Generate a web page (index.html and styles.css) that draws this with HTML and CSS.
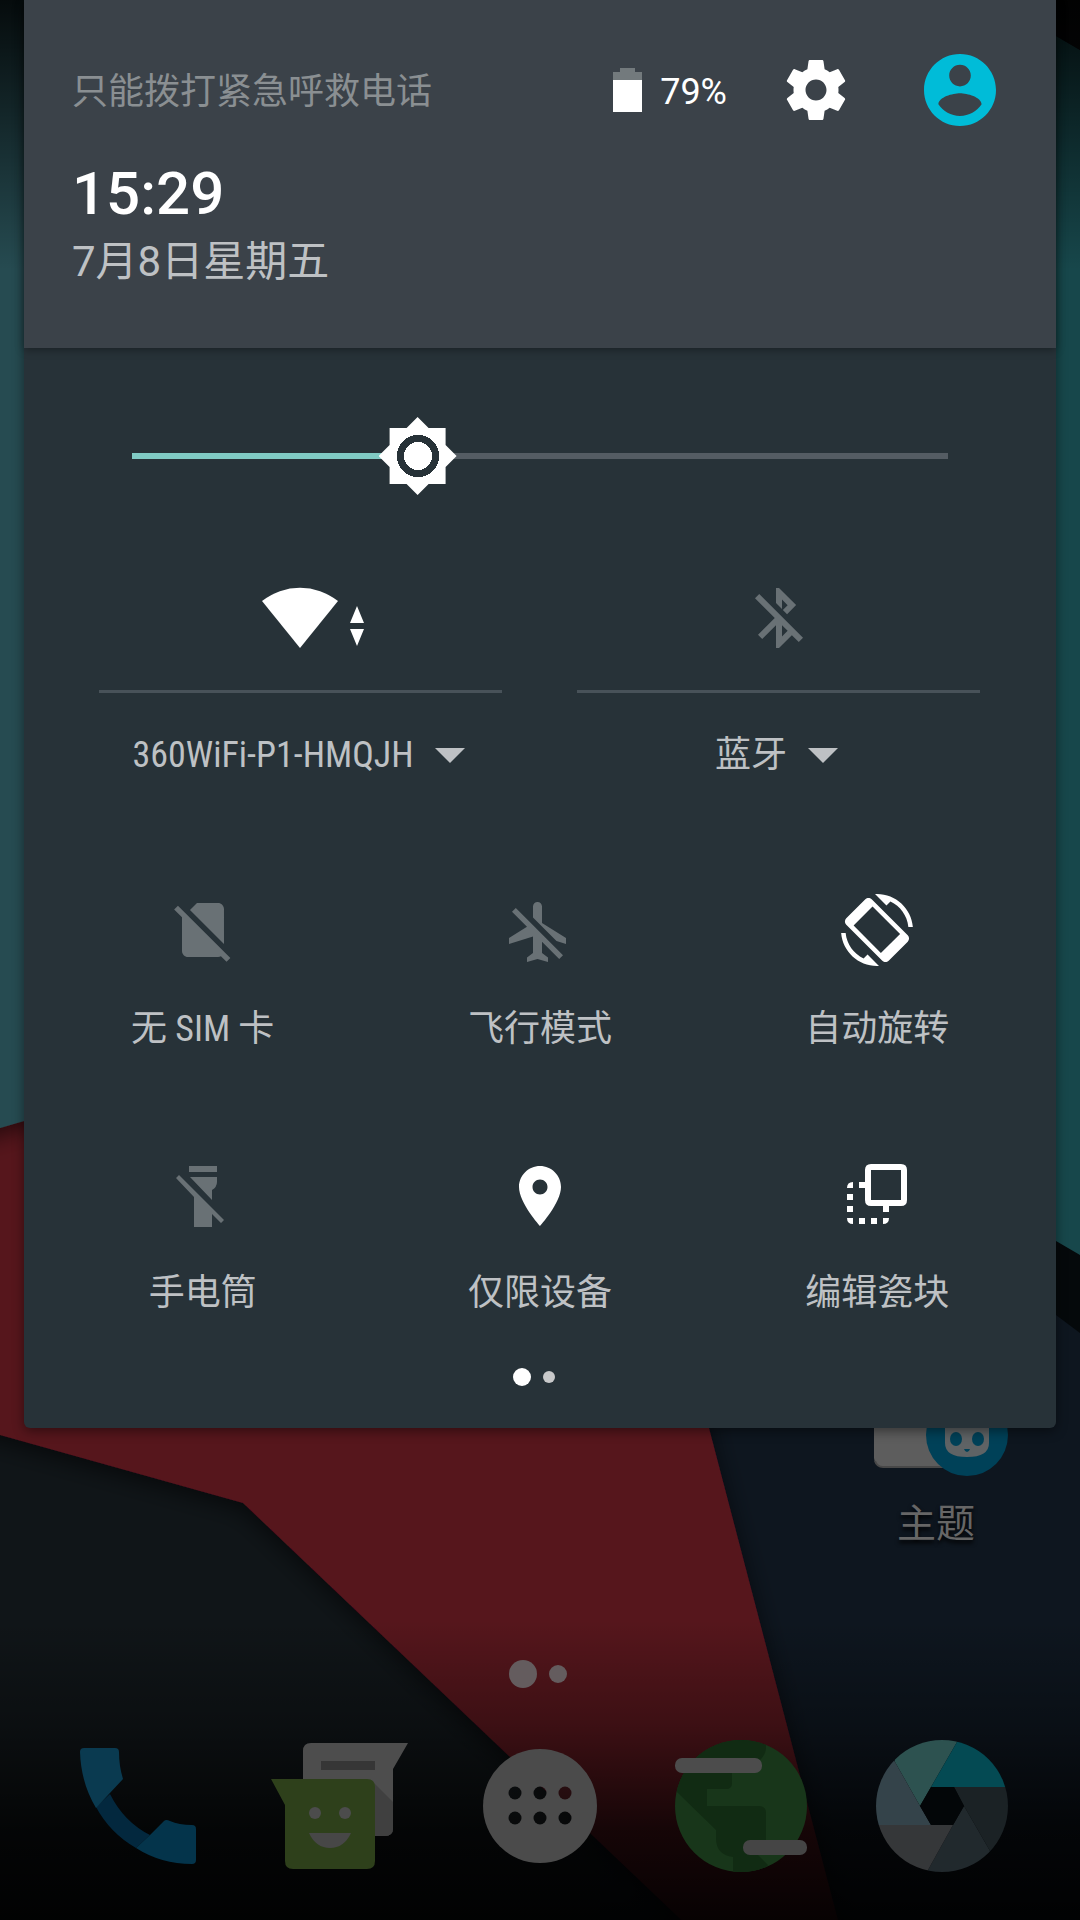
FILE: index.html
```html
<!DOCTYPE html>
<html lang="zh-CN">
<head>
    <meta charset="UTF-8">
    <meta name="viewport" content="width=device-width, initial-scale=1.0">
    <title>快捷设置</title>
    <link rel="stylesheet" href="styles.css">
</head>
<body>
    <div class="screen">
        <svg class="wallpaper" viewBox="0 0 1080 1920" preserveAspectRatio="none" aria-hidden="true">
            <defs>
                <linearGradient id="fade-top" x1="0" y1="0" x2="0" y2="1">
                    <stop offset="0" stop-color="#000" stop-opacity=".85"/>
                    <stop offset=".3" stop-color="#000" stop-opacity=".6"/>
                    <stop offset="1" stop-color="#000" stop-opacity="0"/>
                </linearGradient>
                <linearGradient id="fade-bottom" x1="0" y1="0" x2="0" y2="1">
                    <stop offset="0" stop-color="#000" stop-opacity="0"/>
                    <stop offset=".35" stop-color="#000" stop-opacity=".3"/>
                    <stop offset=".7" stop-color="#000" stop-opacity=".75"/>
                    <stop offset="1" stop-color="#000" stop-opacity=".92"/>
                </linearGradient>
                <filter id="paper-shadow" x="-20%" y="-20%" width="140%" height="140%">
                    <feDropShadow dx="0" dy="6" stdDeviation="12" flood-color="#000" flood-opacity=".6"/>
                </filter>
            </defs>
            <rect width="1080" height="1920" fill="#0e161f"/>
            <path d="M1000 1200h80v133L1000 1273z" fill="#05090b"/>
            <path d="M0 1400H600V1920H0z" fill="#101518"/>
            <path d="M-60 1060H684L709 1428 851 1970H734L243 1503 0 1435-60 1418z" fill="#56131e" filter="url(#paper-shadow)"/>
            <path d="M-60 0H540V960L24 1121 0 1128-60 1145z" fill="#254c51" filter="url(#paper-shadow)"/>
            <path d="M540 0H1056V36L1080 50V1255L1056 1241 540 940z" fill="#17474b"/>
            <path d="M1056 0h24v50l-24-14z" fill="#0b0c0e"/>
            <rect width="1080" height="270" fill="url(#fade-top)"/>
            <rect y="1620" width="1080" height="300" fill="url(#fade-bottom)"/>
        </svg>

        <main class="home">
            <div class="workspace">
                <a href="#themes" class="app">
                    <svg class="app-icon" viewBox="0 0 144 144" aria-hidden="true">
                        <rect x="10" y="36" width="92" height="89" rx="9" fill="#5d5d5d"/>
                        <path d="M11 119q2 6 8 6h63" fill="none" stroke="#484848" stroke-width="2"/>
                        <circle cx="103" cy="93" r="41" fill="#004158"/>
                        <path d="M81 72h44v29q0 14-22 14t-22-14z" fill="#5f6365"/>
                        <ellipse cx="92" cy="97" rx="6" ry="7" fill="#004158"/>
                        <ellipse cx="114" cy="97" rx="6" ry="7" fill="#004158"/>
                        <path d="M100 107h6q-1 3-3 3t-3-3z" fill="#004158"/>
                    </svg>
                    <span class="app-name">主题</span>
                </a>
            </div>

            <div class="home-pages"><i class="current"></i><i></i></div>

            <nav class="dock">
                <a href="#phone" aria-label="电话">
                    <svg viewBox="0 0 144 144">
                        <path d="M30 73L44 60q14 28 40 41L70 114Q44 99 30 73z" fill="#03283e"/>
                        <path d="M18 14h31q4 0 4 4 0 14 4 27L43 60 30 74Q15 49 14 18q0-4 4-4z" fill="#0a3a50"/>
                        <path d="M84 101l14-14q2-2 6 0 9 4 22 4 4 0 4 4v31q0 4-4 4-31 0-56-16z" fill="#04344b"/>
                    </svg>
                </a>
                <a href="#messages" aria-label="信息">
                    <svg viewBox="0 0 144 144">
                        <path d="M44 9h97l-15 26v59q0 8-8 8H36V17q0-8 8-8z" fill="#4d4d4d"/>
                        <path d="M54 27h54v9H54z" fill="#363636"/>
                        <path d="M108 50l18 18v26q0 8-8 8h-10z" fill="#404040"/>
                        <path d="M4 45h96q8 0 8 8v74q0 8-8 8H26q-8 0-8-8V71z" fill="#2e401b"/>
                        <circle cx="48" cy="79" r="6" fill="#4c4c4c"/>
                        <circle cx="78" cy="79" r="6" fill="#4c4c4c"/>
                        <path d="M42 99h42q-7 15-21 15t-21-15z" fill="#474747"/>
                    </svg>
                </a>
                <a href="#apps" aria-label="所有应用">
                    <svg viewBox="0 0 144 144">
                        <defs>
                            <mask id="drawer-holes">
                                <rect width="144" height="144" fill="#fff"/>
                                <circle cx="47" cy="59" r="6.5"/><circle cx="72" cy="59" r="6.5"/><circle cx="97" cy="59" r="6.5"/>
                                <circle cx="47" cy="84" r="6.5"/><circle cx="72" cy="84" r="6.5"/><circle cx="97" cy="84" r="6.5"/>
                            </mask>
                        </defs>
                        <circle cx="72" cy="72" r="57" fill="#4b4b4b" mask="url(#drawer-holes)"/>
                    </svg>
                </a>
                <a href="#browser" aria-label="浏览器">
                    <svg viewBox="0 0 144 144">
                        <defs><clipPath id="globe"><circle cx="72" cy="72" r="66"/></clipPath></defs>
                        <circle cx="72" cy="72" r="66" fill="#18361a"/>
                        <g clip-path="url(#globe)" fill="#112b13">
                            <path d="M0 0h97v14q0 6-6 12L63 38v11q0 6-6 6H38v17h52q7 0 7 7v30l-8 12 10 10-10 12-25-4v-16q-17-2-17-19v-8L8 58 0 50z"/>
                        </g>
                        <rect x="6" y="24" width="87" height="15" rx="7" fill="#4c4c4c"/>
                        <rect x="74" y="106" width="64" height="15" rx="7" fill="#454545"/>
                    </svg>
                </a>
                <a href="#camera" aria-label="相机">
                    <svg viewBox="0 0 144 144">
                        <defs><clipPath id="lens"><circle cx="72" cy="72" r="66"/></clipPath></defs>
                        <g clip-path="url(#lens)">
                            <path d="M25 28L20 0h72l-5 8-26 45-11 19z" fill="#2d5250"/>
                            <path d="M61 53L87 8l5-8h52v53z" fill="#044a53"/>
                            <path d="M84 53h60v64l-24 0-26-45z" fill="#1b2225"/>
                            <path d="M94 72l26 45v27H53l5-8 25-45z" fill="#21292d"/>
                            <path d="M83 91L58 136l-5 8H0V91z" fill="#353739"/>
                            <path d="M61 91H0V0h9l16 28 25 44z" fill="#34434a"/>
                        </g>
                        <path d="M61 53h23l10 19-11 19H61L50 72z" fill="#030608"/>
                    </svg>
                </a>
            </nav>
        </main>

        <section class="shade" aria-label="快捷设置">
            <header class="shade-header">
                <div class="status-row">
                    <span class="carrier">只能拨打紧急呼救电话</span>
                    <span class="battery">
                        <svg viewBox="0 0 30 44" aria-hidden="true">
                            <path d="M8 0h15v4h7v9H1V4h7z" fill="#737a7d"/>
                            <path d="M1 12h29v32H1z" fill="#fff"/>
                        </svg>
                        <span class="percent">79%</span>
                    </span>
                    <button type="button" class="icon-btn settings-btn" aria-label="设置">
                        <svg viewBox="0 0 24 24"><path d="M19.43 12.98c.04-.32.07-.64.07-.98s-.03-.66-.07-.98l2.11-1.65c.19-.15.24-.42.12-.64l-2-3.46c-.12-.22-.39-.3-.61-.22l-2.49 1c-.52-.4-1.08-.73-1.69-.98l-.38-2.65C14.46 2.18 14.25 2 14 2h-4c-.25 0-.46.18-.49.42l-.38 2.65c-.61.25-1.17.59-1.69.98l-2.49-1c-.23-.09-.49 0-.61.22l-2 3.46c-.13.22-.07.49.12.64l2.11 1.65c-.04.32-.07.65-.07.98s.03.66.07.98l-2.11 1.65c-.19.15-.24.42-.12.64l2 3.46c.12.22.39.3.61.22l2.49-1c.52.4 1.08.73 1.69.98l.38 2.65c.03.24.24.42.49.42h4c.25 0 .46-.18.49-.42l.38-2.65c.61-.25 1.17-.59 1.69-.98l2.49 1c.23.09.49 0 .61-.22l2-3.46c.12-.22.07-.49-.12-.64l-2.11-1.65zM12 15.5c-1.93 0-3.5-1.57-3.5-3.5s1.57-3.5 3.5-3.5 3.5 1.57 3.5 3.5-1.57 3.5-3.5 3.5z"/></svg>
                    </button>
                    <button type="button" class="icon-btn user-btn" aria-label="用户">
                        <svg viewBox="2 2 20 20"><path d="M12 2C6.48 2 2 6.48 2 12s4.48 10 10 10 10-4.48 10-10S17.52 2 12 2zm0 3c1.66 0 3 1.34 3 3s-1.34 3-3 3-3-1.34-3-3 1.34-3 3-3zm0 14.2c-2.5 0-4.71-1.28-6-3.22.03-1.99 4-3.08 6-3.08 1.99 0 5.97 1.09 6 3.08-1.29 1.94-3.5 3.22-6 3.22z"/></svg>
                    </button>
                </div>
                <div class="clock">15:29</div>
                <div class="date">7月8日星期五</div>
            </header>

            <div class="shade-body">
                <div class="brightness">
                    <input type="range" min="0" max="100" value="35" aria-label="亮度" style="--level: 35%">
                </div>

                <div class="wide-tiles">
                    <div class="wide-tile on">
                        <button type="button" class="toggle" aria-label="WLAN">
                            <svg class="wifi-icon" viewBox="0 0 132 72">
                                <path d="M27 19A61 61 0 0 1 103 19L65 66z"/>
                                <path d="M122 24l7 17h-14zM115 47h14l-7 17z"/>
                            </svg>
                        </button>
                        <button type="button" class="expand">
                            <span class="latin">360WiFi-P1-HMQJH</span>
                            <svg class="caret" viewBox="0 0 30 15" aria-hidden="true"><path d="M0 0h30L15 15z"/></svg>
                        </button>
                    </div>
                    <div class="wide-tile off">
                        <button type="button" class="toggle" aria-label="蓝牙开关">
                            <svg viewBox="0 0 24 24"><path d="M13 5.83l1.88 1.88-1.6 1.6 1.41 1.41 3.02-3.02L12 2h-1v5.03l2 2v-3.2zM5.41 4L4 5.41 10.59 12 5 17.59 6.41 19 11 14.41V22h1l4.29-4.29 2.3 2.29L20 18.59 5.41 4zM13 18.17v-3.76l1.88 1.88L13 18.17z"/></svg>
                        </button>
                        <button type="button" class="expand">
                            <span>蓝牙</span>
                            <svg class="caret" viewBox="0 0 30 15" aria-hidden="true"><path d="M0 0h30L15 15z"/></svg>
                        </button>
                    </div>
                </div>

                <div class="tiles">
                    <button type="button" class="tile off">
                        <svg viewBox="0 0 24 24"><path d="M18.99 5c0-1.1-.89-2-1.99-2h-7L7.66 5.34 19 16.68 18.99 5zM3.65 3.88L2.38 5.15 5 7.77V19c0 1.1.9 2 2 2h10.01c.35 0 .67-.1.96-.26l1.88 1.88 1.27-1.27L3.65 3.88z"/></svg>
                        <span>无<span class="latin"> SIM </span>卡</span>
                    </button>
                    <button type="button" class="tile off">
                        <svg viewBox="0 0 72 72"><path transform="translate(-1 2) scale(3)" d="M13 9V3.5c0-.83-.67-1.5-1.5-1.5S10 2.67 10 3.5v3.68l7.83 7.83L21 16v-2l-8-5zM3 5.27l4.99 4.99L2 14v2l8-2.5V19l-2 1.5V22l3.5-1 3.5 1v-1.5L13 19v-3.73L18.73 21 20 19.73 4.27 4 3 5.27z"/></svg>
                        <span>飞行模式</span>
                    </button>
                    <button type="button" class="tile on">
                        <svg viewBox="0 0 24 24">
                            <path d="M16.48 2.52c3.27 1.55 5.61 4.72 5.97 8.48h1.5C23.44 4.84 18.29 0 12 0l-.66.03 3.81 3.81 1.33-1.32zM7.52 21.48C4.25 19.94 1.91 16.76 1.55 13H.05C.56 19.16 5.71 24 12 24l.66-.03-3.81-3.81-1.33 1.32z"/>
                            <path fill-rule="evenodd" d="M10.23 1.75c-.59-.59-1.54-.59-2.12 0L1.75 8.11c-.59.59-.59 1.54 0 2.12l12.02 12.02c.59.59 1.54.59 2.12 0l6.36-6.36c.59-.59.59-1.54 0-2.12zM10.5 4.2L4.2 10.5l9.1 9.2 6.4-6.4z"/>
                        </svg>
                        <span>自动旋转</span>
                    </button>
                    <button type="button" class="tile off">
                        <svg viewBox="0 0 72 72"><path d="M22 8h28v6H22zM23 19h27v5q0 5-5 8v10zM12 17l45 45-3 3-9-9v13H27V39L9 20z"/></svg>
                        <span>手电筒</span>
                    </button>
                    <button type="button" class="tile on">
                        <svg viewBox="0 0 72 72"><path transform="translate(0 2) scale(3)" d="M12 2C8.13 2 5 5.13 5 9c0 5.25 7 13 7 13s7-7.75 7-13c0-3.87-3.13-7-7-7zm0 9.5c-1.38 0-2.5-1.12-2.5-2.5s1.12-2.5 2.5-2.5 2.5 1.12 2.5 2.5-1.12 2.5-2.5 2.5z"/></svg>
                        <span>仅限设备</span>
                    </button>
                    <button type="button" class="tile on">
                        <svg viewBox="0 0 72 72">
                            <path fill-rule="evenodd" d="M30 6h30q6 0 6 6v30q0 6-6 6H30q-6 0-6-6V12q0-6 6-6zM30 12v30h30V12z"/>
                            <path d="M12 24v6H6q0-6 6-6zM18 24h6v6h-6zM6 36h6v6H6zM6 48h6v6H6zM6 60h6v6q-6 0-6-6zM18 60h6v6h-6zM30 60h6v6h-6zM42 60h6q0 6-6 6zM42 48h6v6h-6z"/>
                        </svg>
                        <span>编辑瓷块</span>
                    </button>
                </div>

                <div class="shade-pages"><i class="current"></i><i></i></div>
            </div>
        </section>
    </div>
</body>
</html>
```
FILE: styles.css
```css
:root {
    --panel: #273238;
    --header: #3b4249;
    --accent: #80cbc4;
    --text: #bec1c4;
    --disabled: #697175;
}

* {
    box-sizing: border-box;
}

body {
    margin: 0;
    background: #000;
    font-family: Roboto, "Noto Sans CJK SC", sans-serif;
}

button {
    display: block;
    margin: 0;
    padding: 0;
    border: 0;
    background: none;
    color: inherit;
    font: inherit;
    cursor: pointer;
}

svg {
    display: block;
    fill: currentColor;
}

.screen {
    position: relative;
    min-height: 100vh;
    overflow: hidden;
}

.wallpaper {
    position: absolute;
    inset: 0;
    width: 100%;
    height: 100%;
}

/* launcher */

.home {
    position: relative;
    display: flex;
    flex-direction: column;
    justify-content: flex-end;
    min-height: 100vh;
    padding-bottom: 42px;
}

.workspace {
    display: grid;
    grid-template-columns: repeat(4, 1fr);
    padding: 0 12px;
}

.app {
    grid-column: 4;
    display: flex;
    flex-direction: column;
    align-items: center;
    gap: 14px;
    color: #666;
    font-size: 39px;
    line-height: 48px;
    text-decoration: none;
    text-shadow: 0 3px 4px #000;
}

.app-icon {
    width: 144px;
    height: 144px;
}

.home-pages,
.shade-pages {
    display: flex;
    align-items: center;
    justify-content: center;
    gap: 12px;
}

.home-pages {
    margin: 112px 0 46px;
    padding-right: 5px;
}

.home-pages i,
.shade-pages i {
    border-radius: 50%;
}

.home-pages i {
    width: 18px;
    height: 18px;
    background: #645c5e;
}

.home-pages .current {
    width: 28px;
    height: 28px;
}

.dock {
    display: grid;
    grid-template-columns: repeat(5, 1fr);
    justify-items: center;
    padding: 0 38px;
}

.dock svg {
    width: 144px;
    height: 144px;
}

/* notification shade, lies over the launcher */

.shade {
    position: absolute;
    top: 0;
    left: 24px;
    right: 24px;
    background: var(--panel);
    border-radius: 0 0 6px 6px;
    box-shadow: 0 3px 12px rgba(0, 0, 0, 0.45);
    color: var(--text);
}

.shade-header {
    position: relative;
    padding: 54px 60px 61px 48px;
    background: var(--header);
    box-shadow: 0 2px 8px rgba(0, 0, 0, 0.35);
}

.status-row {
    display: flex;
    align-items: center;
    font-size: 36px;
    line-height: 44px;
}

.carrier,
.percent {
    padding-top: 4px;
}

.carrier {
    flex: 1;
    color: #8a8f92;
}

.battery {
    display: flex;
    align-items: center;
    gap: 18px;
    color: #fff;
}

.battery svg {
    width: 30px;
    height: 44px;
}

.icon-btn svg {
    width: 72px;
    height: 72px;
}

.settings-btn {
    margin: 0 72px 0 53px;
    color: #fff;
}

.user-btn {
    color: #00bcd8;
}

.clock {
    margin-top: 32px;
    color: #fff;
    font-size: 60px;
    font-weight: 500;
    line-height: 72px;
}

.date {
    margin-top: 7px;
    font-size: 42px;
    line-height: 50px;
}

.shade-body {
    padding: 69px 0 42px;
}

.brightness {
    padding: 0 69px;
}

.brightness input {
    display: block;
    width: 100%;
    height: 78px;
    margin: 0;
    appearance: none;
    -webkit-appearance: none;
    background: linear-gradient(to right, var(--accent) var(--level), #545c63 var(--level)) center / calc(100% - 78px) 6px no-repeat;
}

.brightness input::-webkit-slider-thumb {
    -webkit-appearance: none;
    width: 78px;
    height: 78px;
    background: radial-gradient(circle, #fff 14px, var(--panel) 14px 21px, #fff 21px);
    clip-path: polygon(39px 0, 50px 11px, 67px 11px, 67px 28px, 78px 39px, 67px 50px, 67px 67px, 50px 67px, 39px 78px, 28px 67px, 11px 67px, 11px 50px, 0 39px, 11px 28px, 11px 11px, 28px 11px);
}

.wide-tiles {
    display: grid;
    grid-template-columns: 1fr 1fr;
    gap: 75px;
    padding: 87px 76px 0 75px;
}

.toggle {
    display: flex;
    justify-content: center;
    width: 100%;
    padding-bottom: 36px;
    border-bottom: 3px solid #485259;
}

.toggle svg,
.tile svg {
    width: 72px;
    height: 72px;
}

.toggle .wifi-icon {
    width: 132px;
}

.on svg {
    color: #fff;
}

.off svg {
    color: var(--disabled);
}

.expand {
    display: flex;
    align-items: center;
    justify-content: center;
    gap: 21px;
    width: 100%;
    margin-top: 40px;
    padding-right: 4px;
    font-size: 36px;
    line-height: 44px;
}

.expand .caret {
    width: 30px;
    height: 15px;
    color: var(--text);
}

.latin {
    font-family: "Roboto Condensed", Roboto, sans-serif;
}

.tiles {
    display: grid;
    grid-template-columns: repeat(3, 1fr);
    row-gap: 107px;
    padding: 117px 10px 0;
}

.tile {
    display: flex;
    flex-direction: column;
    align-items: center;
    gap: 41px;
    font-size: 36px;
    line-height: 44px;
}

.shade-pages {
    margin-top: 53px;
    padding-right: 12px;
}

.shade-pages i {
    width: 12px;
    height: 12px;
    background: #c8c9ca;
}

.shade-pages .current {
    width: 18px;
    height: 18px;
    background: #fff;
}
```
